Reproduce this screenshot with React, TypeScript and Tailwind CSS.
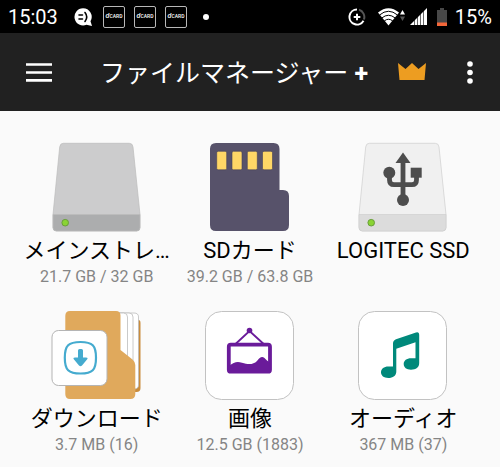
import type { ReactNode } from "react";

type StorageItem = {
  name: string;
  detail?: string;
  icon: ReactNode;
};

const DriveIcon = ({ body, base, edge, children }: { body: string; base: string; edge: string; children?: ReactNode }) => (
  <svg className="size-22 overflow-visible" viewBox="0 0 88 88" aria-hidden="true">
    <path d="M10.300 0.300H76.300Q79.600 0.300 80 4L87 71.500V84.500Q87 88 83.500 88H3.500Q0 88 0 84.500V71.500L6.700 4Q7.100 0.300 10.300 0.300Z" fill={body} stroke={edge} strokeWidth="0.700" />
    <path d="M0 71.500H87V84.500Q87 88 83.500 88H3.500Q0 88 0 84.500Z" fill={base} stroke={edge} strokeWidth="0.700" />
    <circle cx="12.200" cy="79.700" r="3.300" fill="#8ad434" stroke="#6a9e3c" strokeWidth="1" />
    {children}
  </svg>
);

const UsbIcon = () => (
  <DriveIcon body="#f0f0f0" base="#dcdcdc" edge="#cfcfcf">
    <g fill="#4d4d4d">
      <path d="M44 9.500L51.500 20H36.500Z" />
      <circle cx="44" cy="57" r="6" />
      <circle cx="30.300" cy="29.700" r="6" />
      <rect x="51.700" y="24.700" width="11" height="10" />
    </g>
    <path d="M44 18V55M30.500 30V37Q30.500 41.700 35 41.700H53Q57.500 41.700 57.500 37V33" fill="none" stroke="#4d4d4d" strokeWidth="4.800" />
  </DriveIcon>
);

const SdCardIcon = () => (
  <svg className="size-22" viewBox="0 0 88 88" aria-hidden="true">
    <path d="M10 0H67.500Q73.500 0 73.500 6V47H77Q83 47 83 53V82Q83 88 77 88H10Q4 88 4 82V6Q4 0 10 0Z" fill="#57526a" />
    <g fill="#ffd766" stroke="#454057" strokeWidth="0.600">
      <rect x="10.700" y="8.300" width="10" height="18.500" rx="1.500" />
      <rect x="26" y="8.300" width="10" height="18.500" rx="1.500" />
      <rect x="41.300" y="8.300" width="10" height="18.500" rx="1.500" />
      <rect x="56.500" y="8.300" width="10" height="18.500" rx="1.500" />
    </g>
  </svg>
);

const DownloadIcon = () => (
  <svg className="size-22 overflow-visible" viewBox="0 0 88 88" aria-hidden="true">
    <path d="M66 9H85.500Q87.500 9 87.500 12V77Q87.500 81 83.500 81H66Z" fill="#c98c3c" />
    <g fill="#fff" stroke="#bdbdbd" strokeWidth="0.800">
      <path d="M60 2H81Q85.500 2 85.500 6V74Q85.500 78 81 78H60Z" />
      <path d="M60 2H76Q80 2 80 6V74H60Z" />
      <path d="M60 2H70.500Q74.500 2 74.500 6V74H60Z" />
    </g>
    <path d="M17 0H63Q67.500 0 67.500 4.500V39L79.500 48.500Q82.300 51 82.300 54V83Q82.300 88 77.300 88H17Q12.300 88 12.300 83V5Q12.300 0 17 0Z" fill="#e0a95c" />
    <rect x="-1" y="19.500" width="55" height="55" rx="6.500" fill="#fff" stroke="#b5b5b5" />
    <path d="M27.500 31C39.500 31 43 34.500 43 46.700C43 59 39.500 62.500 27.500 62.500C15.500 62.500 11.800 59 11.800 46.700C11.800 34.500 15.500 31 27.500 31Z" fill="none" stroke="#45abcf" strokeWidth="2.200" />
    <path d="M25 39.500Q25 38 26.500 38H28.500Q30 38 30 39.500V46.500H33Q35.500 46.500 34 48.500L29 54.500Q27.500 56 26 54.500L21 48.500Q19.500 46.500 22 46.500H25Z" fill="#45abcf" />
  </svg>
);

const PictureIcon = () => (
  <svg className="size-22 overflow-visible" viewBox="0 0 88 88" aria-hidden="true">
    <rect x="-0.500" y="0.500" width="88" height="88" rx="16" fill="#fff" stroke="#c2c2c2" />
    <circle cx="43.500" cy="19.500" r="2.800" fill="#6a1b9a" />
    <path d="M29.500 33L43.500 20L57.700 33" fill="none" stroke="#6a1b9a" strokeWidth="1.800" />
    <rect x="22.800" y="33.700" width="41.200" height="27" rx="2" fill="none" stroke="#6a1b9a" strokeWidth="3.800" />
    <path d="M23 55C28 51 31 50.300 36 51.700C42 53.500 47 54 51 50C54 46 56 45 58.500 47C60 49 62 50 63.500 51.500V61H23Z" fill="#6a1b9a" />
  </svg>
);

const MusicIcon = () => (
  <svg className="size-22 overflow-visible" viewBox="0 0 88 88" aria-hidden="true">
    <rect x="-0.500" y="0.500" width="88" height="88" rx="16" fill="#fff" stroke="#c2c2c2" />
    <path d="M34 32.500Q34 29.500 37 28.300L57 21.400Q60.200 20.500 60.200 24V52C60.200 56.500 57 58.700 52 58.700C47.500 58.700 44.700 56.500 44.700 53C44.700 49.500 47.700 47.200 52 47.200H56.500V31.200L37.300 37.800V60.500C37.300 64.800 34 67 29.300 67C24.800 67 22 64.700 22 61.300C22 57.800 25 55.500 29.300 55.500H34Z" fill="#00897b" />
  </svg>
);

const items: StorageItem[] = [
  { name: "メインストレ…", detail: "21.7 GB / 32 GB", icon: <DriveIcon body="#cccccd" base="#acadae" edge="#bcbcbc" /> },
  { name: "SDカード", detail: "39.2 GB / 63.8 GB", icon: <SdCardIcon /> },
  { name: "LOGITEC SSD", icon: <UsbIcon /> },
  { name: "ダウンロード", detail: "3.7 MB (16)", icon: <DownloadIcon /> },
  { name: "画像", detail: "12.5 GB (1883)", icon: <PictureIcon /> },
  { name: "オーディオ", detail: "367 MB (37)", icon: <MusicIcon /> },
];

const CardNotification = () => (
  <span className="flex size-[22px] items-center justify-center rounded-xs border border-[#b8b8b8] text-[5px] leading-none font-medium">
    <i className="text-[7px]">d</i>CARD
  </span>
);

const StatusBar = () => (
  <div className="flex h-[33px] items-center justify-between bg-black px-2 text-xl text-white">
    <div className="flex items-center">
      <time className="w-[66px]">15:03</time>
      <svg className="mr-[11px] h-[18px] w-[18px]" viewBox="0 0 18 18" aria-hidden="true">
        <path d="M9 0.300A8.600 8.600 0 1 0 12.500 16.800L18 18L16.500 13.200A8.600 8.600 0 0 0 9 0.300Z" fill="#fff" />
        <path d="M5 7H8.500M5 11H8.500M11 4.500Q14.500 9 11 13.500" fill="none" stroke="#000" strokeWidth="1.600" strokeLinecap="round" />
      </svg>
      <div className="flex gap-[9px]">
        <CardNotification />
        <CardNotification />
        <CardNotification />
      </div>
      <span className="ml-4 size-1.5 rounded-full bg-white" />
    </div>
    <div className="flex items-center">
      <svg className="mr-3 size-[18px]" viewBox="0 0 18 18" fill="none" stroke="#fff" aria-hidden="true">
        <path d="M9 1.500A7.500 7.500 0 1 0 15.500 12.700" strokeWidth="2" />
        <path d="M11 1.800A7.500 7.500 0 0 1 15.900 11.500" stroke="#555" strokeWidth="2" />
        <path d="M9 5.700V12.300M5.700 9H12.300" strokeWidth="2" />
      </svg>
      <svg className="mr-1 h-[18px] w-7" viewBox="0 0 28 18" aria-hidden="true">
        <path d="M0 4.500Q10.500 -4 21 4.500L10.500 17.500Z" fill="#fff" />
        <path d="M1.500 7Q10.500 -0.500 19.500 7M3.800 10Q10.500 4.500 17.200 10M6.200 13Q10.500 9.500 14.800 13" fill="none" stroke="#000" strokeWidth="1" />
        <path d="M22 6.500L24.500 2L27 6.500Z" fill="#fff" />
        <path d="M22 8.500L24.500 13L27 8.500Z" fill="#555" />
      </svg>
      <svg className="mr-[10px] h-[17px] w-[17px]" viewBox="0 0 17 17" aria-hidden="true">
        <path d="M17 0V17H0Z" fill="#fff" />
        <path d="M4.500 10V17M7.500 7V17M10.500 4V17M13.500 1V17" stroke="#000" strokeWidth="0.600" />
      </svg>
      <svg className="mr-2 h-[18px] w-[10px]" viewBox="0 0 10 18" aria-hidden="true">
        <path d="M3 0H7V2H10V18H0V2H3Z" fill="#484848" />
        <path d="M0 14.500H10V18H0Z" fill="#f4673a" />
      </svg>
      <span>15%</span>
    </div>
  </div>
);

const AppBar = () => (
  <header className="flex h-[78px] items-center bg-[#212121] pr-4 pl-[26px] text-white">
    <button type="button" aria-label="メニュー" className="mr-12">
      <svg className="h-[19px] w-[26px]" viewBox="0 0 26 19" aria-hidden="true">
        <path d="M0 1.500H26M0 9.500H26M0 17.300H26" stroke="#fff" strokeWidth="2.700" />
      </svg>
    </button>
    <h1 className="flex-1 pt-1 text-[25px] whitespace-nowrap">
      ファイルマネージャー <span className="font-bold">+</span>
    </h1>
    <button type="button" aria-label="プレミアム" className="mr-[30px]">
      <svg className="h-[18px] w-7" viewBox="0 0 28 18" aria-hidden="true">
        <path d="M0 0L7.500 6L14 0L20.500 6L28 0L26.500 17H1.500Z" fill="#ed9d21" />
      </svg>
    </button>
    <button type="button" aria-label="その他" className="flex w-7 justify-center">
      <svg className="h-[23px] w-1.5" viewBox="0 0 6 23" fill="#fff" aria-hidden="true">
        <circle cx="3" cy="3" r="2.800" />
        <circle cx="3" cy="11.500" r="2.800" />
        <circle cx="3" cy="20" r="2.800" />
      </svg>
    </button>
  </header>
);

export default function App() {
  return (
    <div className="min-h-screen bg-[#fafafa] font-[Roboto,'Noto_Sans_CJK_JP',sans-serif]">
      <StatusBar />
      <AppBar />
      <main className="grid grid-cols-3 gap-y-6 px-5 pt-8">
        {items.map((item) => (
          <button key={item.name} type="button" className="flex h-36 min-w-0 flex-col items-center">
            {item.icon}
            <span className="mt-1 text-[22px] leading-8 whitespace-nowrap text-black">{item.name}</span>
            {item.detail && <span className="text-base leading-5 whitespace-nowrap text-[#858585]">{item.detail}</span>}
          </button>
        ))}
      </main>
    </div>
  );
}
